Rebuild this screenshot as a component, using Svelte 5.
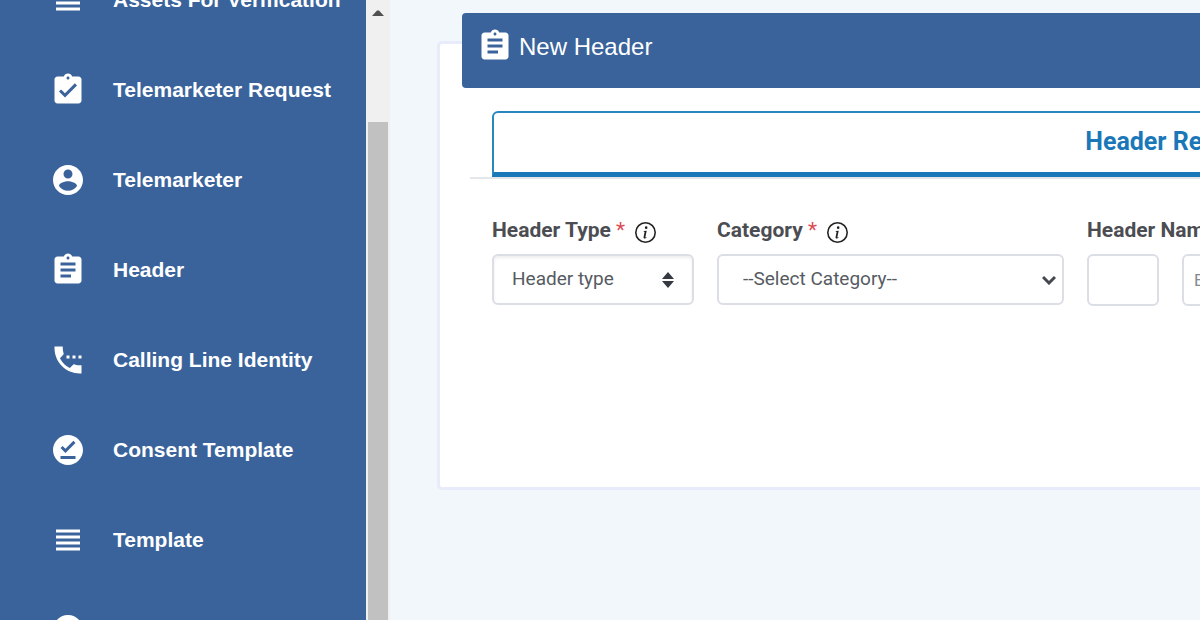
<script>
  const icons = {
    lines: 'M4 15h16v-2H4v2zm0 4h16v-2H4v2zm0-8h16V9H4v2zm0-6v2h16V5H4z',
    task: 'M19 3h-4.18C14.4 1.84 13.3 1 12 1s-2.4.84-2.82 2H5c-1.1 0-2 .9-2 2v14c0 1.1.9 2 2 2h14c1.1 0 2-.9 2-2V5c0-1.1-.9-2-2-2zm-7 0c.55 0 1 .45 1 1s-.45 1-1 1-1-.45-1-1 .45-1 1-1zm-2 14l-4-4 1.41-1.41L10 14.17l6.59-6.59L18 9l-8 8z',
    person: 'M12 2C6.48 2 2 6.48 2 12s4.48 10 10 10 10-4.48 10-10S17.52 2 12 2zm0 3c1.66 0 3 1.34 3 3s-1.34 3-3 3-3-1.34-3-3 1.34-3 3-3zm0 14.2c-2.5 0-4.71-1.28-6-3.22.03-1.99 4-3.08 6-3.08 1.99 0 5.97 1.09 6 3.08-1.29 1.94-3.5 3.22-6 3.22z',
    clipboard: 'M19 3h-4.18C14.4 1.84 13.3 1 12 1s-2.4.84-2.82 2H5c-1.1 0-2 .9-2 2v14c0 1.1.9 2 2 2h14c1.1 0 2-.9 2-2V5c0-1.1-.9-2-2-2zm-7 0c.55 0 1 .45 1 1s-.45 1-1 1-1-.45-1-1 .45-1 1-1zm2 14H7v-2h7v2zm3-4H7v-2h10v2zm0-4H7V7h10v2z',
    phone: 'M11 9h2v2h-2zM15 9h2v2h-2zM19 9h2v2h-2zM20 15.5c-1.25 0-2.45-.2-3.57-.57-.35-.11-.74-.03-1.02.24l-2.2 2.2c-2.83-1.44-5.15-3.75-6.59-6.58l2.2-2.21c.28-.27.36-.66.25-1.01C8.7 6.45 8.5 5.25 8.5 4L8.500 3H3v1c0 9.390 7.610 17 17 17h1v-5.500z',
    offline: 'M12 2C6.5 2 2 6.5 2 12s4.5 10 10 10 10-4.500 10-10S17.500 2 12 2zm5 16H7v-2h10v2zm-6.700-4L7 10.700l1.400-1.400 1.900 1.900 5.300-5.300L17 7.300 10.300 14z'
  };

  const menu = [
    { icon: 'lines', label: 'Assets For Verification' },
    { icon: 'task', label: 'Telemarketer Request' },
    { icon: 'person', label: 'Telemarketer' },
    { icon: 'clipboard', label: 'Header' },
    { icon: 'phone', label: 'Calling Line Identity' },
    { icon: 'offline', label: 'Consent Template' },
    { icon: 'lines', label: 'Template' },
    { icon: 'offline', label: '' }
  ];
</script>

{#snippet icon(name)}
  <svg class="icon" viewBox="0 0 24 24" aria-hidden="true"><path d={icons[name]} /></svg>
{/snippet}

{#snippet info()}
  <svg class="info" viewBox="0 0 16 16" aria-hidden="true">
    <circle cx="8" cy="8" r="7.400" />
    <path d="m8.930 6.588-2.290.287-.082.380.450.083c.294.070.352.176.288.469l-.738 3.468c-.194.897.105 1.319.808 1.319.545 0 1.178-.252 1.465-.598l.088-.416c-.2.176-.492.246-.686.246-.275 0-.375-.193-.304-.533L8.930 6.588zM9.500 4.300a1 1 0 1 1-2 0 1 1 0 0 1 2 0z" />
  </svg>
{/snippet}

<div class="page">
  <nav class="sidebar">
    <ul>
      {#each menu as item}
        <li><a href="#top">{@render icon(item.icon)}<span>{item.label}</span></a></li>
      {/each}
    </ul>
  </nav>
  <div class="scrollbar">
    <svg viewBox="0 0 12 6" aria-hidden="true"><path d="M0 6L5 .5h2L12 6z" /></svg>
    <div class="thumb"></div>
  </div>

  <main>
    <section class="card">
      <h1>{@render icon('clipboard')}New Header</h1>
      <div class="tabs">
        <button type="button" class="tab">Header Registration</button>
      </div>
      <form>
        <div class="field type">
          <label for="type">Header Type <b>*</b>{@render info()}</label>
          <div class="control">
            <select id="type"><option>Header type</option></select>
            <svg class="sort" viewBox="0 0 12 16" aria-hidden="true"><path d="M6 0l6 7H0zM6 16l6-7H0z" /></svg>
          </div>
        </div>
        <div class="field category">
          <label for="category">Category <b>*</b>{@render info()}</label>
          <div class="control">
            <select id="category"><option>--Select Category--</option></select>
            <svg class="chevron" viewBox="0 0 14 10" aria-hidden="true"><path d="M1 2l6 6 6-6" /></svg>
          </div>
        </div>
        <div class="field name">
          <label for="name" id="name-label">Header Name <b>*</b></label>
          <div class="pair">
            <input class="prefix" type="text" aria-labelledby="name-label" />
            <input class="long" id="name" type="text" placeholder="Enter Header" />
          </div>
        </div>
      </form>
    </section>
  </main>
</div>

<style>
  :global(body) {
    overflow: hidden;
  }
  * {
    box-sizing: border-box;
  }
  .page {
    display: flex;
    height: 100vh;
    overflow: hidden;
    background: #f1f7fa;
    font-family: Roboto, 'Liberation Sans', sans-serif;
  }
  .sidebar {
    flex: 0 0 366px;
    overflow: hidden;
    background: #3a639b;
  }
  ul {
    margin: -45px 0 0;
    padding: 0;
    list-style: none;
  }
  .sidebar a {
    display: flex;
    align-items: center;
    gap: 27px;
    height: 90px;
    padding-left: 50px;
    color: #fff;
    font: bold 21px/24px 'Liberation Sans', Arial, sans-serif;
    text-decoration: none;
    white-space: nowrap;
  }
  .icon {
    flex: none;
    width: 36px;
    height: 36px;
    fill: #fff;
  }
  .scrollbar {
    display: flex;
    flex: 0 0 24px;
    flex-direction: column;
    align-items: center;
    padding-top: 10px;
    background: #f0f0f0;
  }
  .scrollbar svg {
    flex: none;
    width: 12px;
    height: 6px;
    fill: #505050;
  }
  .thumb {
    flex: 1;
    width: 20px;
    margin-top: 106px;
    background: #c1c1c1;
  }
  main {
    flex: 1;
    min-width: 0;
    padding: 41px 0 0 47px;
  }
  .card {
    min-width: 1521px;
    min-height: 449px;
    border: 3px solid #e7ebfa;
    border-radius: 5px;
    background: #fff;
  }
  h1 {
    display: flex;
    gap: 6px;
    height: 75px;
    margin: -31px 22px 0;
    padding: 15px;
    border-radius: 4px;
    background: #3a639b;
    color: #fff;
    font: 24px/38px 'Liberation Sans', Arial, sans-serif;
  }
  .tabs {
    display: flex;
    margin: 23px 30px 0;
    padding: 0 22px;
    border-bottom: 2px solid #e4e6e9;
  }
  .tab {
    flex: 1;
    height: 66px;
    padding: 0 0 2px;
    border: 2px solid #2a86bf;
    border-bottom: 5px solid #1b78b8;
    border-radius: 6px 6px 0 0;
    background: #fff;
    color: #1b78b8;
    font: bold 25px/28px Roboto, sans-serif;
  }
  form {
    display: flex;
    gap: 23px;
    padding: 36px 52px;
  }
  .field {
    display: flex;
    flex-direction: column;
    gap: 9px;
  }
  .type {
    flex: 0 0 202px;
  }
  .category {
    flex: 0 0 347px;
  }
  .name {
    flex: 1;
  }
  label {
    display: flex;
    align-items: center;
    height: 30px;
    color: #4b4d52;
    font-size: 21px;
    font-weight: bold;
    line-height: 24px;
    white-space: pre;
  }
  label b {
    color: #dc4c55;
    font-weight: normal;
  }
  .info {
    width: 21px;
    height: 21px;
    margin: 4px 0 0 10px;
    fill: #222;
  }
  .info circle {
    fill: none;
    stroke: #222;
    stroke-width: 1.200;
  }
  .control {
    position: relative;
  }
  select,
  input {
    height: 51px;
    border: 2px solid #dcdee5;
    border-radius: 6px;
    background: #fff;
    color: #565b62;
    font: 19px/24px Roboto, sans-serif;
  }
  select {
    width: 100%;
    appearance: none;
  }
  .type select {
    padding: 0 18px 2px;
    box-shadow: inset 0 2px 3px #0001;
  }
  .category select {
    padding: 0 24px 2px;
  }
  .control svg {
    position: absolute;
    top: 50%;
    transform: translateY(-50%);
    pointer-events: none;
  }
  .sort {
    right: 20px;
    width: 12px;
    height: 16px;
    fill: #343a40;
  }
  .chevron {
    right: 8px;
    width: 14px;
    height: 10px;
    fill: none;
    stroke: #45494f;
    stroke-width: 3;
  }
  .pair {
    display: flex;
    gap: 23px;
  }
  input {
    min-width: 0;
    height: 52px;
    padding: 0 10px;
    font-size: 17px;
  }
  input::placeholder {
    color: #85898f;
  }
  .prefix {
    width: 72px;
  }
  .long {
    flex: 1;
  }
</style>
